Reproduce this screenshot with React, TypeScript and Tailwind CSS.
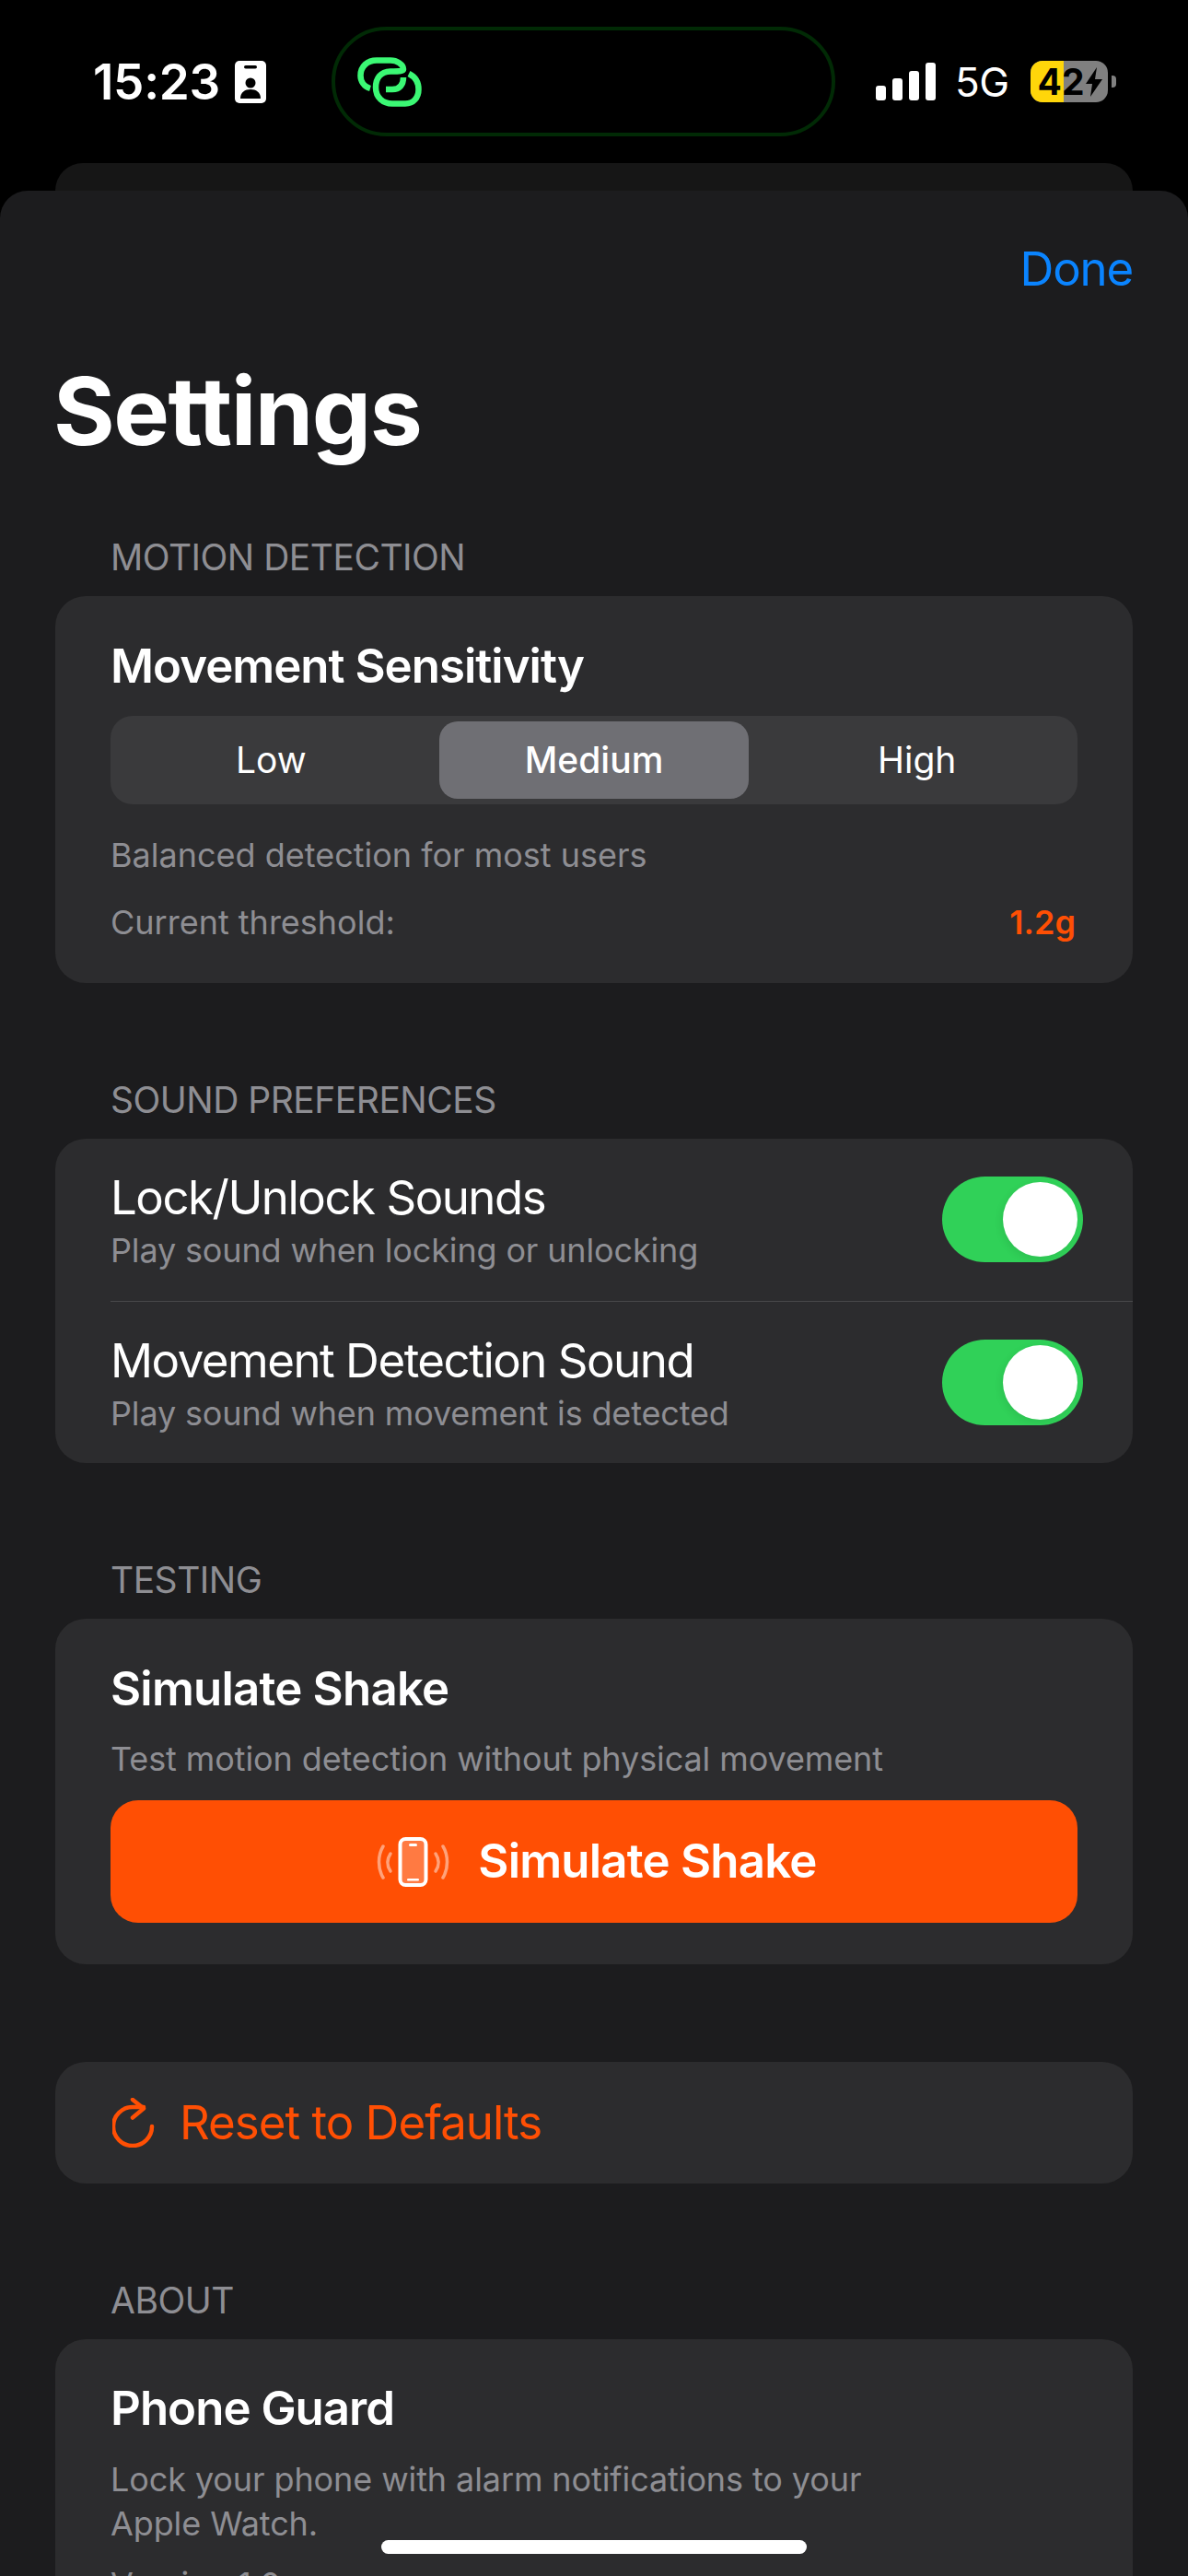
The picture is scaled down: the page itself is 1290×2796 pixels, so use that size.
import type { ReactNode } from 'react'

const font = { fontFamily: 'Inter, "Liberation Sans", sans-serif' }

function IdBadge() {
  return (
    <svg width="34" height="46" viewBox="0 0 34 46" className="ml-[16px] shrink-0">
      <rect width="34" height="46" rx="5" fill="#fff" />
      <rect x="10" y="5" width="14" height="3.5" rx="1.75" fill="#000" />
      <circle cx="17" cy="24" r="5.5" fill="#000" />
      <path d="M6 41c0-7 5-10 11-10s11 3 11 10z" fill="#000" />
    </svg>
  )
}

function LinkLogo() {
  return (
    <svg width="70" height="54" viewBox="0 0 70 54" fill="none" stroke="#3bf874" strokeWidth="6.5" className="shrink-0">
      <path d="M14 34C7 32 3.500 26 3.500 20 3.500 10 11 3.500 21 3.500H36C43 3.500 50 8 50 13 50 15 47 15.500 36 15.500 25 16 20 23 20 33 20 44 28 50.500 38 50.500H52C61 50.500 66.500 44 66.500 35 66.500 27 62 21 56 18" strokeLinecap="butt" />
      <path d="M31 35H38C46 35 50 30 50 22" />
    </svg>
  )
}

function Signal() {
  return (
    <div className="flex items-end gap-[7px] h-[41px]">
      <div className="w-[11px] h-[16px] rounded-[3px] bg-white" />
      <div className="w-[11px] h-[24px] rounded-[3px] bg-white" />
      <div className="w-[11px] h-[32px] rounded-[3px] bg-white" />
      <div className="w-[11px] h-[41px] rounded-[3px] bg-white" />
    </div>
  )
}

function Battery() {
  return (
    <div className="flex items-center ml-[23px]">
      <div className="relative w-[84px] h-[45px] rounded-[13px] overflow-hidden bg-[#808080] flex items-center">
        <div className="absolute left-0 top-0 bottom-0 w-[36px] bg-[#ffd60a]" />
        <span className="relative ml-[8px] text-[39px] leading-[45px] font-bold text-black">42</span>
        <svg width="18" height="32" viewBox="0 0 18 32" className="relative ml-[1px]">
          <path d="M12 0 0 18h7L5 32 18 13h-8z" fill="#000" />
        </svg>
      </div>
      <div className="w-[5px] h-[13px] ml-[4px] rounded-r-[4px] bg-[#808080]" />
    </div>
  )
}

function SectionLabel({ children }: { children: ReactNode }) {
  return <div className="px-[120px] text-[39px] leading-[48px] text-[#8e8e93] mb-[18px] tracking-[-0.5px]">{children}</div>
}

function Card({ children, className }: { children: ReactNode; className?: string }) {
  return <div className={'mx-[60px] rounded-[33px] bg-[#2c2c2e] ' + (className ?? '')}>{children}</div>
}

function Toggle() {
  return (
    <div className="w-[153px] h-[93px] rounded-full bg-[#30d158] flex items-center justify-end pr-[6px] shrink-0">
      <div className="w-[81px] h-[81px] rounded-full bg-white shadow-[-2px_3px_8px_rgba(0,0,0,0.08)]" />
    </div>
  )
}

function ToggleRow({ title, sub }: { title: string; sub: string }) {
  return (
    <div className="flex-1 flex items-center justify-between pl-[60px] pr-[54px]">
      <div className="pt-[4px]">
        <div className="text-[51px] leading-[60px] text-white tracking-[-1.5px]">{title}</div>
        <div className="text-[36px] leading-[48px] text-[#8e8e93] mt-[3px] tracking-[-0.15px]">{sub}</div>
      </div>
      <Toggle />
    </div>
  )
}

function ShakePhone() {
  return (
    <svg width="80" height="54" viewBox="0 0 80 54" fill="none" strokeLinecap="round" className="shrink-0">
      <rect x="25.500" y="2" width="28" height="50" rx="6" fill="#ff7a42" stroke="#fff" strokeWidth="4" />
      <rect x="35" y="7" width="9" height="3" rx="1.500" fill="#fff" />
      <rect x="33" y="45" width="13" height="2.500" rx="1.250" fill="#fff" />
      <g stroke="#ffa27a" strokeWidth="3.500">
        <path d="M7 10C1 20 1 34 7 44" />
        <path d="M15 18C11 24 11 31 15 37" />
        <path d="M72 10C78 20 78 34 72 44" />
        <path d="M64 18C68 24 68 31 64 37" />
      </g>
    </svg>
  )
}

function ResetIcon() {
  return (
    <svg width="46" height="54" viewBox="0 0 46 54" fill="none" stroke="#ff4f04" strokeWidth="4.500" strokeLinecap="round" strokeLinejoin="round" className="shrink-0">
      <path d="M43 31a21 21 0 1 1-21-21h12" />
      <path d="M22 2l12 9.500-12 10" />
    </svg>
  )
}

export default function App() {
  return (
    <div style={font} className="relative w-[1290px] h-[2796px] overflow-hidden bg-black">
      {/* status bar */}
      <div className="h-[207px] relative">
        <div className="flex items-start pl-[101px] pt-[29px]">
          <div className="flex items-center h-[119px] w-[259px]">
            <span className="text-[53px] leading-[60px] font-semibold text-white tracking-[-0.3px]">15:23</span>
            <IdBadge />
          </div>
          <div className="w-[547px] h-[119px] rounded-[60px] border-[4px] border-[#012a05] flex items-center pl-[24px]">
            <LinkLogo />
          </div>
          <div className="flex items-center h-[119px] ml-[44px]">
            <Signal />
            <span className="ml-[21px] text-[44px] leading-[50px] text-white tracking-[-0.5px]">5G</span>
            <Battery />
          </div>
        </div>
        <div className="absolute left-[60px] right-[60px] bottom-0 h-[30px] rounded-t-[30px] bg-[#161616]" />
      </div>

      {/* sheet */}
      <div className="h-full rounded-t-[30px] bg-[#1c1c1e] pt-[30px]">
        <div className="px-[60px] text-right text-[51px] leading-[60px] text-[#0a84ff] mt-[25px] tracking-[-1.2px]">Done</div>
        <div className="pl-[58px] mt-[64px] text-[102px] leading-[120px] font-bold text-white tracking-[-1.5px]">Settings</div>

        <div className="mt-[75px]">
          <SectionLabel>MOTION DETECTION</SectionLabel>
          <Card className="px-[60px] pt-[46px] pb-[42px]">
            <div className="text-[51px] leading-[60px] font-semibold text-white tracking-[-1px]">Movement Sensitivity</div>
            <div className="mt-[24px] h-[96px] rounded-[24px] bg-[#3a3a3c] p-[6px] flex gap-[14px]">
              <div className="flex-1 flex items-center justify-center text-[39px] text-white">Low</div>
              <div className="flex-1 flex items-center justify-center text-[39px] font-medium text-white rounded-[20px] bg-[#6f6f74]">Medium</div>
              <div className="flex-1 flex items-center justify-center text-[39px] text-white">High</div>
            </div>
            <div className="mt-[31px] text-[36px] leading-[48px] text-[#8e8e93]">Balanced detection for most users</div>
            <div className="mt-[25px] pr-[2px] flex justify-between text-[36px] leading-[48px]">
              <span className="text-[#8e8e93]">Current threshold:</span>
              <span className="font-semibold text-[#ff4f04]">1.2g</span>
            </div>
          </Card>
        </div>

        <div className="mt-[103px]">
          <SectionLabel>SOUND PREFERENCES</SectionLabel>
          <Card className="h-[352px] flex flex-col">
            <ToggleRow title="Lock/Unlock Sounds" sub="Play sound when locking or unlocking" />
            <div className="ml-[60px] h-[1px] bg-[#48484a]" />
            <ToggleRow title="Movement Detection Sound" sub="Play sound when movement is detected" />
          </Card>
        </div>

        <div className="mt-[103px]">
          <SectionLabel>TESTING</SectionLabel>
          <Card className="px-[60px] pt-[46px] pb-[45px]">
            <div className="text-[51px] leading-[60px] font-semibold text-white tracking-[-0.8px]">Simulate Shake</div>
            <div className="mt-[22px] text-[36px] leading-[48px] text-[#8e8e93] tracking-[-0.1px]">Test motion detection without physical movement</div>
            <div className="mt-[21px] h-[133px] rounded-[30px] bg-[#ff4f04] pl-[6px] flex items-center justify-center gap-[30px]">
              <ShakePhone />
              <span className="text-[51px] font-semibold text-white tracking-[-0.8px]">Simulate Shake</span>
            </div>
          </Card>
        </div>

        <Card className="mt-[106px] h-[132px] flex items-center pl-[62px] gap-[27px]">
          <ResetIcon />
          <span className="text-[51px] text-[#ff4f04] tracking-[-1px]">Reset to Defaults</span>
        </Card>

        <div className="mt-[103px]">
          <SectionLabel>ABOUT</SectionLabel>
          <Card className="px-[60px] pt-[45px] pb-[45px]">
            <div className="text-[51px] leading-[60px] font-semibold text-white tracking-[-1px]">Phone Guard</div>
            <div className="mt-[23px] text-[36px] leading-[48px] text-[#8e8e93] tracking-[-0.1px]">
              Lock your phone with alarm notifications to your
              <br />
              Apple Watch.
            </div>
            <div className="mt-[18px] text-[36px] leading-[48px] text-[#8e8e93]">Version 1.0</div>
          </Card>
        </div>
      </div>

      <div className="absolute left-[414px] top-[2757px] w-[462px] h-[15px] rounded-full bg-white" />
    </div>
  )
}
